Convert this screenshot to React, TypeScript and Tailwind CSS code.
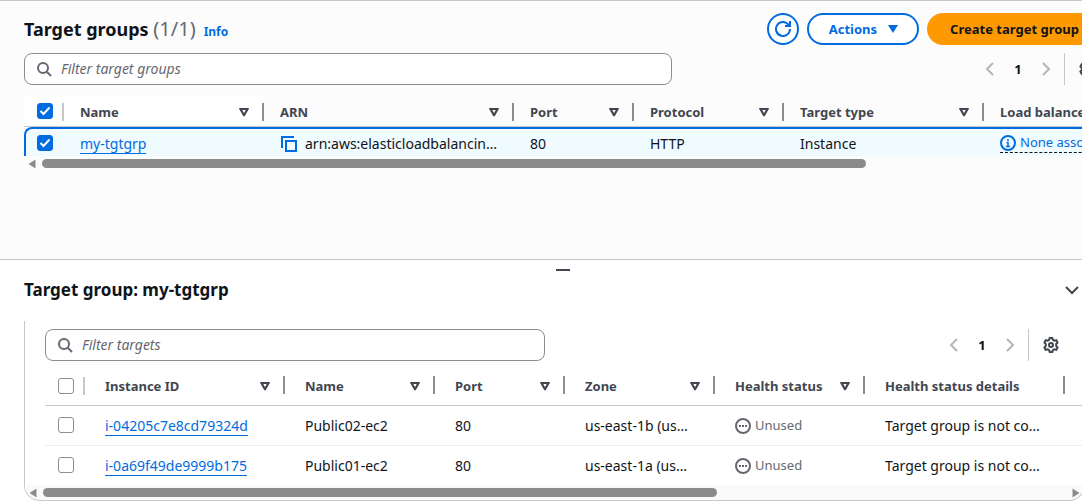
import React from "react";

const COLUMN_DIVIDER = "absolute right-0 top-1/2 h-[18px] w-[2px] -translate-y-1/2";

function SortIcon() {
  return (
    <svg viewBox="0 0 16 16" className="h-4 w-4 shrink-0" fill="currentColor" fillRule="evenodd" aria-hidden="true">
      <path d="M3.700 4h8.600a.6.600 0 0 1 .5 1L9 11.700a1.150 1.150 0 0 1-2 0L3.200 5a.6.600 0 0 1 .5-1zM6.300 6 8 9.200 9.700 6z" />
    </svg>
  );
}

function SearchIcon() {
  return (
    <svg viewBox="0 0 16 16" className="h-4 w-4 shrink-0 text-[#656871]" fill="none" stroke="currentColor" strokeWidth="2" aria-hidden="true">
      <circle cx="7" cy="7" r="5" />
      <path d="m15 15-4.500-4.500" />
    </svg>
  );
}

function GearIcon() {
  return (
    <svg viewBox="0 0 16 16" className="h-4 w-4 shrink-0" fill="none" stroke="currentColor" strokeWidth="2" strokeLinejoin="round" aria-hidden="true">
      <path d="M6.600 1h2.800l.5 1.900 1.300.8 2-.6 1.400 2.400L13.200 7v2l1.400 1.500-1.400 2.400-2-.6-1.300.8L9.400 15H6.600l-.5-1.900-1.300-.8-2 .6-1.400-2.400L2.800 9V7L1.400 5.500l1.400-2.400 2 .6 1.300-.8z" />
      <circle cx="8" cy="8" r="2" />
    </svg>
  );
}

function PageChevron({ next = false }: { next?: boolean }) {
  return (
    <button type="button" disabled aria-label={next ? "Next page" : "Previous page"} className="flex h-8 w-4 items-center text-[#b4b4bb]">
      <svg viewBox="0 0 16 16" className="h-4 w-4" fill="none" stroke="currentColor" strokeWidth="2" aria-hidden="true">
        {next ? <path d="m5 2 6 6-6 6" /> : <path d="M11 2 5 8l6 6" />}
      </svg>
    </button>
  );
}

function CheckBox({ label, checked = false }: { label: string; checked?: boolean }) {
  return (
    <span className="relative block h-4 w-4">
      <input
        type="checkbox"
        aria-label={label}
        defaultChecked={checked}
        className="peer block h-4 w-4 appearance-none rounded-[3px] border border-[#8c8c94] bg-white checked:border-[#006ce0] checked:bg-[#006ce0]"
      />
      <svg viewBox="0 0 16 16" className="pointer-events-none absolute inset-0 hidden h-4 w-4 peer-checked:block" fill="none" stroke="#fff" strokeWidth="2" aria-hidden="true">
        <path d="m3.500 8 3 3 6-6.500" />
      </svg>
    </span>
  );
}

function Pager() {
  return (
    <div className="flex items-center">
      <PageChevron />
      <button type="button" aria-current="page" className="w-10 text-center font-bold text-[#0f141a]">1</button>
      <PageChevron next />
      <span className="ml-[10px] h-8 w-px bg-[#c6c6cd]" />
      <button type="button" aria-label="Preferences" className="ml-[14px] text-[#424650]">
        <GearIcon />
      </button>
    </div>
  );
}

function FilterBox({ label, className }: { label: string; className: string }) {
  return (
    <label className={`flex h-8 items-center gap-[9px] rounded-lg border border-[#8c8c94] bg-white px-[11px] text-sm ${className}`}>
      <SearchIcon />
      <input type="text" aria-label={label} placeholder={label} className="min-w-0 flex-1 bg-transparent outline-none placeholder:text-[#656871] placeholder:italic placeholder:opacity-100" />
    </label>
  );
}

function HeaderCell({ title, sortable = true, className }: { title: string; sortable?: boolean; className: string }) {
  return (
    <th scope="col" className={`relative border-b border-[#c6c6cd] pt-px pr-3 text-left font-bold text-[#424650] ${className}`}>
      <div className="flex items-center justify-between whitespace-nowrap">
        {title}
        {sortable && <SortIcon />}
      </div>
      <span className={`${COLUMN_DIVIDER} bg-[#8c8c94]`} />
    </th>
  );
}

function ScrollBar({ thumb, right = false }: { thumb: string; right?: boolean }) {
  return (
    <div className="flex h-[15px] items-center text-[#8b8b8b]" aria-hidden="true">
      <svg viewBox="0 0 8 10" className="ml-1 h-[10px] w-2 shrink-0" fill="currentColor">
        <path d="M7.500.500v9L.500 5z" />
      </svg>
      <span className="flex flex-1 px-[6px]">
        <span className={`h-[9px] rounded-full bg-[#8b8b8b] ${thumb}`} />
      </span>
      {right && (
        <svg viewBox="0 0 8 10" className="mr-1 h-[10px] w-2 shrink-0" fill="currentColor">
          <path d="M.500.500v9L7.500 5z" />
        </svg>
      )}
    </div>
  );
}

const groupColumns = ["Name", "ARN", "Port", "Protocol", "Target type", "Load balancer"];

const targets = [
  { id: "i-04205c7e8cd79324d", name: "Public02-ec2", port: 80, zone: "us-east-1b (us…" },
  { id: "i-0a69f49de9999b175", name: "Public01-ec2", port: 80, zone: "us-east-1a (us…" },
];

function TargetGroups() {
  return (
    <section className="h-[259px] overflow-hidden border-t border-[#c6c6cd] bg-[#fcfcfd] pl-6">
      <div className="-mr-5 flex items-center justify-between pt-3">
        <div className="flex items-baseline gap-2">
          <h1 className="text-lg leading-7 font-bold">
            Target groups <span className="text-xl leading-7 font-normal text-[#656871]">(1/1)</span>
          </h1>
          <a href="#info" className="text-xs font-bold text-[#006ce0]">Info</a>
        </div>
        <div className="flex gap-2 font-bold">
          <button type="button" aria-label="Refresh" className="flex h-8 w-8 items-center justify-center rounded-full border-2 border-[#006ce0] bg-white text-[#006ce0]">
            <svg viewBox="0 0 16 16" className="h-4 w-4" fill="none" stroke="currentColor" strokeWidth="2" aria-hidden="true">
              <path d="M15 8a7 7 0 1 1-2.200-5.100L15 5" />
              <path d="M15 0v5h-5" />
            </svg>
          </button>
          <button type="button" className="flex h-8 items-center gap-2 rounded-full border-2 border-[#006ce0] bg-white pr-4 pl-5 text-[#006ce0]">
            Actions
            <svg viewBox="0 0 16 16" className="h-4 w-4" fill="currentColor" aria-hidden="true">
              <path d="M3 4h10l-5 8z" />
            </svg>
          </button>
          <button type="button" className="h-8 rounded-full bg-[#ff9900] px-[23px] whitespace-nowrap text-[#0f141a]">Create target group</button>
        </div>
      </div>
      <div className="-mr-[13px] flex items-center justify-between pt-2">
        <FilterBox label="Filter target groups" className="w-[648px]" />
        <Pager />
      </div>
      <div className="mt-3 h-[59px] overflow-hidden">
        <table className="w-[1160px] table-fixed border-separate border-spacing-0">
          <colgroup>
            <col className="w-[40px]" />
            <col className="w-[200px]" />
            <col className="w-[250px]" />
            <col className="w-[120px]" />
            <col className="w-[150px]" />
            <col className="w-[200px]" />
            <col className="w-[200px]" />
          </colgroup>
          <thead>
            <tr className="h-[30px]">
              <th className="relative border-b border-[#c6c6cd] bg-white pb-px pl-[13px]">
                <CheckBox label="Select all target groups" checked />
                <span className={`${COLUMN_DIVIDER} bg-[#c6c6cd]`} />
              </th>
              {groupColumns.map((c) => (
                <HeaderCell key={c} title={c} className={c === "Name" ? "bg-white pl-4" : "pl-4"} />
              ))}
            </tr>
          </thead>
          <tbody className="text-sm">
            <tr className="h-8 bg-[#f0fbff] [&>td]:border-t-2 [&>td]:border-[#006ce0] [&>td]:bg-[#f0fbff]">
              <td className="rounded-tl-lg border-l-2 pb-[2px] pl-[11px]">
                <CheckBox label="Select my-tgtgrp" checked />
              </td>
              <td className="pl-4">
                <a href="#my-tgtgrp" className="border-b border-[#006ce0] text-[#006ce0]">my-tgtgrp</a>
              </td>
              <td className="pl-[17px]">
                <div className="flex items-center gap-2 whitespace-nowrap">
                  <button type="button" aria-label="Copy ARN" className="text-[#006ce0]">
                    <svg viewBox="0 0 16 16" className="h-4 w-4" fill="none" stroke="currentColor" strokeWidth="2" aria-hidden="true">
                      <path d="M5 5h10v10H5z" />
                      <path d="M13 1H1v11" />
                    </svg>
                  </button>
                  arn:aws:elasticloadbalancin…
                </div>
              </td>
              <td className="pl-4">80</td>
              <td className="pl-4">HTTP</td>
              <td className="pl-4">Instance</td>
              <td className="pb-[2px] pl-4 text-[13px]">
                <button type="button" className="flex items-center gap-1 border-b border-dashed border-[#0f141a] whitespace-nowrap text-[#006ce0]">
                  <svg viewBox="0 0 16 16" className="h-4 w-4" fill="none" stroke="currentColor" strokeWidth="2" aria-hidden="true">
                    <circle cx="8" cy="8" r="7" />
                    <path d="M8 4v2M6.500 7.500H8V11M6 11.500h4" strokeWidth="1.500" />
                  </svg>
                  None associated
                </button>
              </td>
            </tr>
          </tbody>
        </table>
      </div>
      <ScrollBar thumb="w-[824px]" />
    </section>
  );
}

function TargetDetails() {
  return (
    <section className="border-t border-[#c6c6cd] bg-white pl-6">
      <div className="-mr-5 flex h-5 items-center justify-center">
        <span className="h-[2px] w-[14px] bg-[#424650]" />
      </div>
      <div className="-mt-1 flex items-center justify-between pr-[2px]">
        <h2 className="text-[17px] leading-7 font-bold">Target group: my-tgtgrp</h2>
        <button type="button" aria-label="Collapse panel" className="text-[#424650]">
          <svg viewBox="0 0 16 16" className="h-4 w-4" fill="none" stroke="currentColor" strokeWidth="2" aria-hidden="true">
            <path d="m2 5 6 6 6-6" />
          </svg>
        </button>
      </div>
      <div className="mt-[17px] -mr-[3px] overflow-hidden rounded-b-2xl border border-t-0 border-[#c6c6cd]">
        <div className="flex items-center justify-between pt-2 pr-[25px] pl-5">
          <FilterBox label="Filter targets" className="w-[500px]" />
          <Pager />
        </div>
        <div className="mt-1 ml-5 overflow-hidden">
          <table className="w-[1170px] table-fixed border-separate border-spacing-0">
            <colgroup>
              <col className="w-[40px]" />
              <col className="w-[200px]" />
              <col className="w-[150px]" />
              <col className="w-[130px]" />
              <col className="w-[150px]" />
              <col className="w-[150px]" />
              <col className="w-[200px]" />
              <col className="w-[150px]" />
            </colgroup>
            <thead>
              <tr className="h-[41px]">
                <th className="relative border-b border-[#c6c6cd] pt-px pl-[13px]">
                  <CheckBox label="Select all targets" />
                  <span className={`${COLUMN_DIVIDER} mt-px bg-[#c6c6cd]`} />
                </th>
                {["Instance ID", "Name", "Port", "Zone", "Health status"].map((c) => (
                  <HeaderCell key={c} title={c} className="pt-[3px] pl-5" />
                ))}
                <HeaderCell title="Health status details" sortable={false} className="pt-[3px] pl-5" />
                <th className="border-b border-[#c6c6cd]" />
              </tr>
            </thead>
            <tbody className="text-sm [&>tr:first-child>td]:border-b [&>tr>td]:border-[#ebebf0]">
              {targets.map((t) => (
                <tr key={t.id} className="h-[39px] first:h-[40px] [&>td+td]:pl-5">
                  <td className="pb-px pl-[13px]">
                    <CheckBox label={`Select ${t.id}`} />
                  </td>
                  <td>
                    <a href={`#${t.id}`} className="border-b border-[#006ce0] text-[#006ce0]">{t.id}</a>
                  </td>
                  <td>{t.name}</td>
                  <td>{t.port}</td>
                  <td>{t.zone}</td>
                  <td>
                    <span className="flex items-center gap-1 text-[13px] text-[#656871]">
                      <svg viewBox="0 0 16 16" className="h-4 w-4" fill="none" stroke="currentColor" strokeWidth="2" aria-hidden="true">
                        <circle cx="8" cy="8" r="7" />
                        <path d="M4 8h2M7 8h2M10 8h2" />
                      </svg>
                      Unused
                    </span>
                  </td>
                  <td className="whitespace-nowrap">Target group is not co…</td>
                  <td />
                </tr>
              ))}
            </tbody>
          </table>
        </div>
        <div className="bg-[#fafafa]">
          <ScrollBar thumb="w-[674px]" right />
        </div>
      </div>
    </section>
  );
}

export default function App() {
  return (
    <main className="overflow-hidden bg-white font-['Noto_Sans','Open_Sans',sans-serif] text-[13px] leading-5 text-[#0f141a]">
      <TargetGroups />
      <TargetDetails />
    </main>
  );
}
